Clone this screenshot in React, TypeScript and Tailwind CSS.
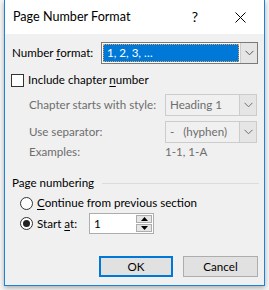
import React from "react";

const Chevron = ({ color = "#5a5a5a" }: { color?: string }) => (
  <svg width="9" height="6" viewBox="0 0 9 6">
    <path d="M0.5 0.8 L4.5 4.8 L8.5 0.8" fill="none" stroke={color} strokeWidth="1" />
  </svg>
);

const U = ({ children }: { children: React.ReactNode }) => <span className="underline underline-offset-2">{children}</span>;

export default function App() {
  return (
    <div
      className="w-[269px] h-[290px] bg-[#f6f6f6] overflow-hidden text-[11.6px] text-black whitespace-nowrap"
      style={{ fontFamily: 'Lato, "Noto Sans", sans-serif' }}
    >
      <div className="ml-[4px] w-[261px] h-[286px] border-x border-b border-[#1883d7] bg-[#f0f0f0] flex flex-col shadow-[0_2px_5px_rgba(0,0,0,0.3)]">
        {/* title bar */}
        <div className="h-[34px] bg-white flex items-center shrink-0">
          <span className="ml-[8px] text-[12.6px] leading-none">Page Number Format</span>
          <span className="ml-auto mr-[37px] text-[14px] leading-none">?</span>
          <svg width="11" height="11" viewBox="0 0 11 11" className="mr-[18px]">
            <path d="M0.5 0.5 L10.5 10.5 M10.5 0.5 L0.5 10.5" stroke="#000" strokeWidth="1" />
          </svg>
        </div>
        {/* body */}
        <div className="flex flex-col">
          {/* Number format */}
          <div className="mt-[8px] h-[22px] flex items-center">
            <span className="ml-[7px] w-[89px] leading-none">
              Number <U>f</U>ormat:
            </span>
            <div className="w-[157px] h-[22px] border border-[#7a7a7a] bg-white flex">
              <div className="flex-1 m-[1px] bg-[#0078d7] border border-dotted border-[#e8a050] text-white flex items-center pl-[3px] leading-none">
                1, 2, 3, …
              </div>
              <div className="w-[17px] bg-[#e5e5e5] border-l border-[#cccccc] flex items-center justify-center">
                <Chevron />
              </div>
            </div>
          </div>
          {/* include chapter number */}
          <div className="mt-[8px] h-[16px] flex items-center">
            <div className="ml-[6px] w-[13px] h-[13px] border border-[#333333] bg-white" />
            <span className="ml-[4px] leading-none">
              Include chapter <U>n</U>umber
            </span>
          </div>
          {/* chapter style */}
          <div className="mt-[6px] h-[22px] flex items-center text-[#6d6d6d]">
            <span className="ml-[24px] w-[136px] leading-none">Chapter starts with style:</span>
            <div className="w-[92px] h-[22px] border border-[#cccccc] bg-[#f0f0f0] flex">
              <div className="flex-1 flex items-center pl-[4px] leading-none">Heading 1</div>
              <div className="w-[17px] bg-[#e5e5e5] border-l border-[#cccccc] flex items-center justify-center">
                <Chevron color="#707070" />
              </div>
            </div>
          </div>
          {/* separator */}
          <div className="mt-[5px] h-[22px] flex items-center text-[#6d6d6d]">
            <span className="ml-[24px] w-[136px] leading-none">Use separator:</span>
            <div className="w-[92px] h-[22px] border border-[#cccccc] bg-[#f0f0f0] flex">
              <div className="flex-1 flex items-center pl-[4px] leading-none whitespace-pre">-   (hyphen)</div>
              <div className="w-[17px] bg-[#e5e5e5] border-l border-[#cccccc] flex items-center justify-center">
                <Chevron color="#707070" />
              </div>
            </div>
          </div>
          {/* examples */}
          <div className="mt-[1px] h-[16px] flex items-center text-[#6d6d6d]">
            <span className="ml-[24px] w-[136px] leading-none">Examples:</span>
            <span className="leading-none">1-1, 1-A</span>
          </div>
          {/* page numbering heading */}
          <div className="mt-[15px] h-[16px] flex items-center">
            <span className="ml-[7px] leading-none">Page numbering</span>
            <div className="ml-[8px] mr-[5px] flex-1 h-px bg-[#dcdcdc]" />
          </div>
          {/* continue radio */}
          <div className="mt-[4px] h-[16px] flex items-center">
            <div className="ml-[15px] w-[13px] h-[13px] rounded-full border border-[#333333] bg-white" />
            <span className="ml-[4px] leading-none">
              <U>C</U>ontinue from previous section
            </span>
          </div>
          {/* start at */}
          <div className="mt-[2px] h-[21px] flex items-center">
            <div className="ml-[15px] w-[13px] h-[13px] rounded-full border border-[#333333] bg-white flex items-center justify-center">
              <div className="w-[7px] h-[7px] rounded-full bg-[#222222]" />
            </div>
            <span className="ml-[4px] w-[52px] leading-none">
              Start <U>a</U>t:
            </span>
            <div className="w-[65px] h-[21px] border border-[#adadad] bg-white flex">
              <div className="flex-1 flex items-center pl-[4px] leading-none">1</div>
              <div className="w-[16px] flex flex-col mt-[1px] mr-[1px] mb-[1px] gap-px">
                <div className="flex-1 bg-[#e6e6e6] border border-[#adadad] flex items-center justify-center">
                  <svg width="7" height="4" viewBox="0 0 7 4">
                    <path d="M0 4 L3.5 0 L7 4 Z" fill="#000" />
                  </svg>
                </div>
                <div className="flex-1 bg-[#e6e6e6] border border-[#adadad] flex items-center justify-center">
                  <svg width="7" height="4" viewBox="0 0 7 4">
                    <path d="M0 0 L3.5 4 L7 0 Z" fill="#000" />
                  </svg>
                </div>
              </div>
            </div>
          </div>
          {/* buttons */}
          <div className="mt-[22px] h-[21px] flex justify-end gap-[10px] pr-[6px]">
            <div className="w-[74px] h-[21px] border-2 border-[#0078d7] bg-[#e1e1e1] flex items-center justify-center leading-none">
              OK
            </div>
            <div className="w-[75px] h-[21px] border border-[#adadad] bg-[#e1e1e1] flex items-center justify-center leading-none">
              Cancel
            </div>
          </div>
        </div>
      </div>
    </div>
  );
}
